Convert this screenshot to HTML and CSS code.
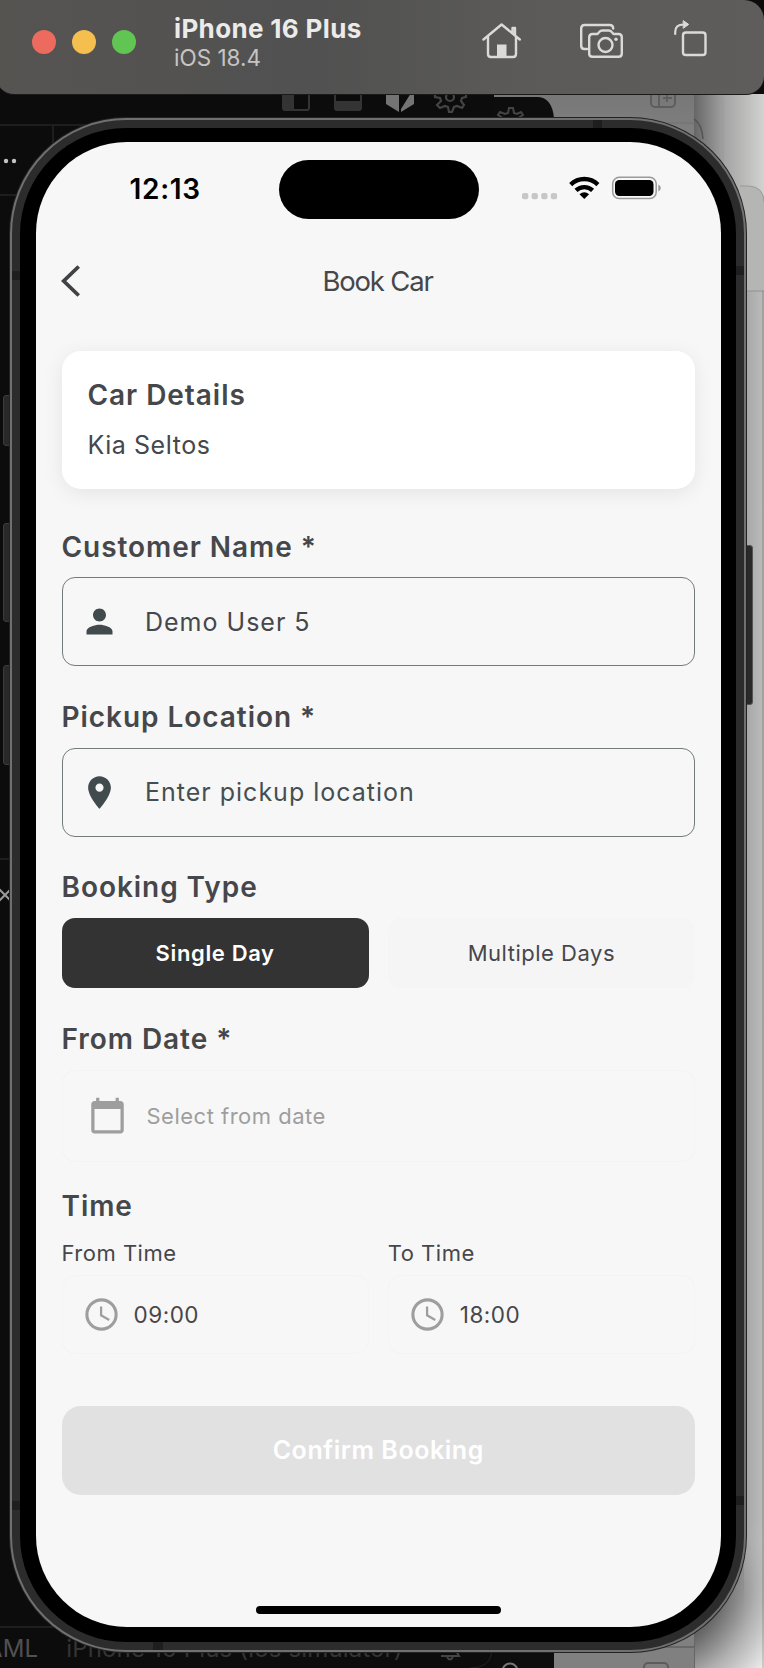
FILE: index.html
```html
<!DOCTYPE html>
<html lang="en">
<head>
<meta charset="utf-8">
<title>iPhone 16 Plus – Book Car</title>
<link rel="stylesheet" href="styles.css">
</head>
<body>
<div class="desktop">
  <svg class="backdrop" width="764" height="1668" viewBox="0 0 764 1668">
    <defs>
      <linearGradient id="paneTop" x1="0" y1="0" x2="0" y2="1"><stop offset="0" stop-color="#777"/><stop offset="1" stop-color="#8e8e8e"/></linearGradient>
      <linearGradient id="edge" x1="0" y1="0" x2="1" y2="0"><stop offset="0" stop-color="#666"/><stop offset=".45" stop-color="#a5a5a5"/><stop offset="1" stop-color="#d2d2d0"/></linearGradient>
      <linearGradient id="side" x1="0" y1="0" x2="1" y2="0"><stop offset="0" stop-color="#a0a0a0"/><stop offset="1" stop-color="#bcbcbc"/></linearGradient>
      <radialGradient id="low" gradientUnits="userSpaceOnUse" cx="650" cy="1580" r="145"><stop offset=".5" stop-color="#666"/><stop offset=".74" stop-color="#b0b0b0"/><stop offset="1" stop-color="#efefef"/></radialGradient>
      <linearGradient id="fade" x1="0" y1="0" x2="0" y2="1"><stop offset="0" stop-color="#000"/><stop offset="1" stop-color="#fff"/></linearGradient>
      <mask id="lowMask"><rect x="694" y="1520" width="70" height="90" fill="url(#fade)"/><rect x="694" y="1610" width="70" height="58" fill="#fff"/></mask>
    </defs>
    <rect width="764" height="1668" fill="#0c0c0c"/>
    <g fill="none" stroke="#1e1e1e" stroke-width="2">
      <path d="M0 125H120M53 125v40M0 195H20M0 859h12M0 1627h70"/>
    </g>
    <circle cx="6" cy="161" r="2.2" fill="#c4c4c4"/><circle cx="14" cy="161" r="2.2" fill="#c4c4c4"/>
    <path d="M-2 888l14 14M-2 902l14-14" stroke="#999" stroke-width="2"/>
    <g fill="none" stroke="#343434" stroke-width="2">
      <rect x="283" y="84" width="26" height="26" rx="2"/><rect x="335" y="84" width="26" height="26" rx="2"/>
    </g>
    <path d="M283 84h11v26h-11zM335 101h26v9h-26z" fill="#343434"/>
    <path d="M386 90h13v22l-13-8zM401 112V109l10-16h3v11z" fill="#747474"/>
    <g fill="none" stroke="#444" stroke-width="2.2">
      <circle cx="450" cy="97" r="4"/>
      <path d="M435 94v3l5 1 1 3-4 4 3 3 5-2 3 1 1 5h3l2-5 3-1 5 2 2-3-3-4 1-3 4-1v-3"/>
    </g>
    <path d="M494 94H764V200H494z" fill="url(#paneTop)"/>
    <path d="M494 97h43q15 0 17 21h-60z" fill="#0d0d0d"/>
    <path d="M503 118l-5-3 2-3 5 2 3-1 1-5h4l1 5 3 1 4-2 2 3-5 3" fill="none" stroke="#444" stroke-width="2"/>
    <rect x="651" y="84" width="24" height="23" rx="4" fill="none" stroke="#5d5d5d" stroke-width="2"/>
    <path d="M659 94v13M663 98h9M667 94v8" stroke="#5d5d5d" stroke-width="1.8"/>
    <path d="M640 123h55" stroke="#777" stroke-width="2"/>
    <rect x="694" y="94" width="70" height="197" fill="url(#edge)"/>
    <path d="M714 94q9 1 9 11v60" fill="none" stroke="#9b9b9b"/>
    <path d="M694 119q8 5 9 20" fill="none" stroke="#555" stroke-width="1.5"/>
    <path d="M740 186h9q15 1 15 16v89h-24z" fill="#b5b5b3"/>
    <path d="M740 186h9q15 1 15 16" fill="none" stroke="#999"/>
    <rect x="740" y="291" width="24" height="1377" fill="url(#side)"/>
    <rect x="694" y="1540" width="50" height="128" fill="#8a8a8a"/>
    <path d="M745 291h19" stroke="#929292"/>
    <rect x="494" y="1600" width="60" height="68" fill="#0d0d0d"/>
    <rect x="554" y="1600" width="140" height="68" fill="#808080"/>
    <path d="M640 1647h54" stroke="#686868" stroke-width="2"/>
    <rect x="694" y="1520" width="70" height="148" fill="url(#low)" mask="url(#lowMask)"/>
    <path d="M763 291v1377" stroke="#000" stroke-opacity=".13" stroke-width="2"/>
    <path d="M694.5 1630v38" stroke="#666"/>
    <rect x="644" y="1663" width="24" height="20" rx="4" fill="none" stroke="#5c5c5c" stroke-width="2"/>
    <path d="M441 1656h18l-3-5M447 1657q3 5 6 0" fill="none" stroke="#444" stroke-width="2"/>
    <circle cx="510" cy="1671" r="7.5" fill="none" stroke="#777" stroke-width="2"/>
    <path d="M492 1652q-2 16-22 16" fill="none" stroke="#222"/>
  </svg>
  <div class="editor-bar"><span class="lang">AML</span><span>iPhone 16 Plus (ios simulator)</span></div>

  <header class="toolbar">
    <div class="lights"><i class="red"></i><i class="amber"></i><i class="green"></i></div>
    <div class="device"><b>iPhone 16 Plus</b><span>iOS 18.4</span></div>
    <svg class="tools" width="230" height="48" viewBox="480 16 230 48" fill="none" stroke="#dcdad8" stroke-width="2.4" stroke-linecap="round" stroke-linejoin="round">
      <path d="M483.500 39.500L501.600 24.500 519.800 39.500M488 37v17q0 3 3 3h22q3 0 3-3V37M512.500 32.500v-4.500h2.500v7"/>
      <path d="M497 44.500h9.500V57H497z" fill="#dcdad8" stroke="none"/>
      <path d="M587 49h-2.500q-3.300 0-3.300-3.300V28.500q0-3.500 3.500-3.500h25q3.500 0 3.500 3.500"/>
      <path d="M592.500 34h5l2-2.200q1-1.300 2.700-1.300h6.600q1.700 0 2.700 1.300l2 2.200h5q3.300 0 3.300 3.300v16.200q0 3.300-3.300 3.300h-26q-3.300 0-3.300-3.300V37.300q0-3.300 3.300-3.300z"/>
      <circle cx="605.500" cy="45" r="7"/><circle cx="616" cy="39.300" r="1.700" fill="#dcdad8" stroke="none"/>
      <rect x="683" y="32.500" width="22.500" height="22.500" rx="2.800"/>
      <path d="M675.200 34v-2q0-7.500 8.500-7.500" stroke-width="2.200"/>
      <path d="M683.500 20.800l5.200 3.600-5.200 3.700z" fill="#dcdad8" stroke-width="1"/>
    </svg>
  </header>

  <i class="key mute"></i><i class="key up"></i><i class="key down"></i><i class="key power"></i>
  <div class="phone">
    <i class="band b1"></i><i class="band b2"></i><i class="band b3"></i><i class="band b4"></i><i class="band b5"></i><i class="band b6"></i>
    <div class="bezel">
      <div class="screen">
        <div class="status">
          <span class="clock">12:13</span>
          <span class="island"></span>
          <svg width="140" height="26" viewBox="521 175 140 26">
            <g fill="#c7c7c7"><rect x="522" y="193" width="6.300" height="6.300" rx="2"/><rect x="531.600" y="193" width="6.300" height="6.300" rx="2"/><rect x="541.200" y="193" width="6.300" height="6.300" rx="2"/><rect x="550.800" y="193" width="6.300" height="6.300" rx="2"/></g>
            <g fill="none" stroke="#000" stroke-width="4.300"><path d="M570.700 184.600a19.300 19.300 0 0 1 27.200 0"/><path d="M576 190.400a12 12 0 0 1 16.600 0"/></g>
            <path d="M579.500 194.300q4.800-4 9.600 0l-4.800 4.700z"/>
            <rect x="612.700" y="177.300" width="43.500" height="21.300" rx="6.500" fill="none" stroke="#999" stroke-width="1.500"/>
            <rect x="615" y="180" width="38.500" height="16" rx="4.200"/>
            <path d="M658.300 184.500q2.500 1 2.500 3.500t-2.500 3.500z" fill="#999"/>
          </svg>
        </div>
        <nav class="nav">
          <svg width="20" height="34" viewBox="0 0 20 34" fill="none" stroke="#414245" stroke-width="3.800"><path d="M17.700 2.500L2.700 17 17.700 31.500"/></svg>
          <h1>Book Car</h1>
        </nav>
        <main class="form">
          <section class="card"><h2>Car Details</h2><p>Kia Seltos</p></section>

          <h2 class="label customer">Customer Name *</h2>
          <div class="input">
            <svg class="icon" viewBox="0 0 24 24" fill="#414b4d"><path d="M12 12c2.210 0 4-1.790 4-4s-1.790-4-4-4-4 1.790-4 4 1.790 4 4 4zm0 2c-2.670 0-8 1.340-8 4v2h16v-2c0-2.660-5.330-4-8-4z"/></svg>
            <span class="name">Demo User 5</span>
          </div>

          <h2 class="label pickup">Pickup Location *</h2>
          <div class="input">
            <svg class="icon" viewBox="0 0 24 24" fill="#414b4d"><path d="M12 2C8.130 2 5 5.130 5 9c0 5.250 7 13 7 13s7-7.750 7-13c0-3.870-3.130-7-7-7zm0 9.500c-1.380 0-2.500-1.120-2.500-2.500s1.120-2.500 2.500-2.500 2.500 1.120 2.500 2.500-1.120 2.500-2.500 2.500z"/></svg>
            <span class="hint">Enter pickup location</span>
          </div>

          <h2 class="label type">Booking Type</h2>
          <div class="pair types"><div class="seg on">Single Day</div><div class="seg">Multiple Days</div></div>

          <h2 class="label from">From Date *</h2>
          <div class="input date">
            <svg class="icon" viewBox="0 0 24 24" fill="#9e9e9e"><path d="M20 3h-1V1h-2v2H7V1H5v2H4c-1.100 0-2 .9-2 2v16c0 1.100.9 2 2 2h16c1.100 0 2-.9 2-2V5c0-1.100-.9-2-2-2zm0 18H4V8h16v13z"/></svg>
            <span>Select from date</span>
          </div>

          <h2 class="label time">Time</h2>
          <div class="pair times">
            <div><p class="small">From Time</p>
              <div class="input slot"><svg class="icon" viewBox="0 0 24 24" fill="none" stroke="#9e9e9e"><circle cx="12" cy="12" r="9" stroke-width="1.900"/><path d="M11.750 7v5.500l5 2.900" stroke-width="1.400"/></svg><span>09:00</span></div></div>
            <div><p class="small to">To Time</p>
              <div class="input slot"><svg class="icon" viewBox="0 0 24 24" fill="none" stroke="#9e9e9e"><circle cx="12" cy="12" r="9" stroke-width="1.900"/><path d="M11.750 7v5.500l5 2.900" stroke-width="1.400"/></svg><span>18:00</span></div></div>
          </div>
          <div class="confirm">Confirm Booking</div>
        </main>
        <div class="home"></div>
      </div>
    </div>
  </div>
</div>
</body>
</html>
```

FILE: styles.css
```css
* { box-sizing: border-box; margin: 0; padding: 0; }
body { width: 764px; height: 1668px; overflow: hidden; font-family: Inter, "Liberation Sans", sans-serif; color: #46474a; }
svg { display: block; flex: none; }
i { display: block; }
.desktop { position: relative; width: 764px; height: 1668px; overflow: hidden; background: #0c0c0c; }
.backdrop { position: absolute; inset: 0; }
.editor-bar { position: absolute; left: -14px; bottom: 4px; display: flex; gap: 28px; font-size: 24px; line-height: 30px; color: #343434; white-space: nowrap; letter-spacing: .15px; }
.editor-bar .lang { color: #505050; }

/* Simulator window title bar */
.toolbar { position: absolute; left: -4px; top: 0; width: 768px; height: 94px; padding: 0 54px 0 36px; display: flex; background: linear-gradient(90deg, #565451 0, #515151 42%, #5b5a58 68%, #5e5d5b 100%); border-radius: 0 20px 18px 18px; box-shadow: 0 1px 0 #1a1a1a; }
.lights { display: flex; gap: 16px; margin-top: 30px; }
.lights i { width: 24px; height: 24px; border-radius: 50%; }
.red { background: #ed6a5e; }
.amber { background: #f5bf4f; }
.green { background: #61c554; }
.device { display: flex; flex-direction: column; margin: 12px 0 0 38px; white-space: nowrap; }
.device b { font-size: 26px; line-height: 33px; font-weight: 700; color: #ecebea; letter-spacing: .35px; }
.device span { font-size: 22.500px; line-height: 26px; color: #c6c5c4; }
.tools { margin: 16px 0 0 auto; }

/* Device hardware */
.phone { position: absolute; left: 10px; top: 118px; width: 736px; height: 1534px; padding: 8px; background: #2c2c2c; border: 2px solid #707070; border-radius: 116px; box-shadow: 0 0 0 1px #222; }
.band { position: absolute; background: #1e1e1e; }
.b1 { left: 581px; top: 0; width: 9px; height: 8px; }
.b2 { left: 0; top: 151px; width: 8px; height: 9px; }
.b3 { right: 0; top: 146px; width: 8px; height: 9px; }
.b4 { left: 0; top: 1381px; width: 8px; height: 9px; }
.b5 { right: 0; top: 1376px; width: 8px; height: 9px; }
.b6 { left: 141px; bottom: 0; width: 10px; height: 8px; }
.key { position: absolute; left: 3px; width: 8px; background: #292929; border: 1px solid #3b3b3b; border-radius: 3px 0 0 3px; }
.mute { top: 395px; height: 51px; }
.up { top: 523px; height: 99px; }
.down { top: 665px; height: 100px; }
.power { left: 745px; top: 545px; width: 8px; height: 160px; border: 1px solid #555; border-radius: 0 3px 3px 0; }
.bezel { height: 100%; padding: 14px 15px 15px 16px; background: #000; border-radius: 106px; }
.screen { position: relative; height: 1485px; width: 685px; background: #f7f7f7; border-radius: 91px; overflow: hidden; }

/* Status bar */
.status { height: 98px; display: flex; align-items: flex-start; padding-left: 93.500px; }
.clock { width: 149px; margin-top: 29px; font-size: 28px; line-height: 36px; font-weight: 600; color: #000; letter-spacing: .7px; }
.island { width: 200px; height: 59px; margin-top: 18px; border-radius: 30px; background: #000; }
.status svg { margin: 33px 0 0 42.500px; }
.nav { height: 82px; padding: 0 25px; display: grid; grid-template-columns: 20px 1fr 20px; align-items: center; }
.nav h1 { text-align: center; font-size: 27.500px; font-weight: 400; line-height: 34px; letter-spacing: -1.200px; padding-right: 2px; }

/* Booking form */
.form { padding: 29px 26px 0 25.500px; }
.form h2 { font-size: 28px; line-height: 34px; font-weight: 600; white-space: nowrap; letter-spacing: .95px; }
.card { height: 138px; padding: 26.500px 26px; border-radius: 19px; background: #fff; box-shadow: 0 4px 20px rgba(0,0,0,.08); }
.card p { margin-top: 18.500px; font-size: 25px; line-height: 30px; letter-spacing: .55px; }
.customer { margin: 40.500px 0 13.500px; }
.pickup { margin: 33.500px 0 14px; }
.type { margin: 33px 0 14px; }
.from { margin: 34px 0 14.500px; }
.time { margin: 27px 0 17px; }
.input { height: 89px; padding-left: 17.500px; display: flex; align-items: center; border: 1.500px solid #747b7c; border-radius: 13px; font-size: 25px; line-height: 30px; white-space: nowrap; }
.input span { margin-left: 26px; letter-spacing: 1px; }
.input .hint { color: #454f51; }
.icon { width: 39px; height: 39px; }
.pair { display: grid; grid-template-columns: 1fr 1fr; gap: 19px; }
.seg { height: 70px; border-radius: 13px; background: #f5f5f5; text-align: center; line-height: 70px; font-size: 22px; letter-spacing: .5px; }
.seg.on { background: #333; color: #fff; font-weight: 600; letter-spacing: .65px; }
.input.date { height: 91.500px; padding-left: 25.500px; font-size: 22px; color: #9e9e9e; border-color: #f4f4f4; }
.input.date span { margin-left: 19.500px; letter-spacing: .5px; }
.small { font-size: 22px; line-height: 26px; letter-spacing: .5px; margin-bottom: 9.500px; }
.input.slot { height: 79px; padding-left: 19px; font-size: 22.500px; border-color: #f4f4f4; }
.input.slot span { margin-left: 13px; letter-spacing: .5px; }
.confirm { height: 89px; margin-top: 51.500px; border-radius: 19px; background: #e1e1e1; color: #fff; text-align: center; font-size: 25px; font-weight: 600; line-height: 89px; letter-spacing: .55px; }
.home { position: absolute; left: 220px; bottom: 13px; width: 245px; height: 8px; border-radius: 4px; background: #000; }
```
